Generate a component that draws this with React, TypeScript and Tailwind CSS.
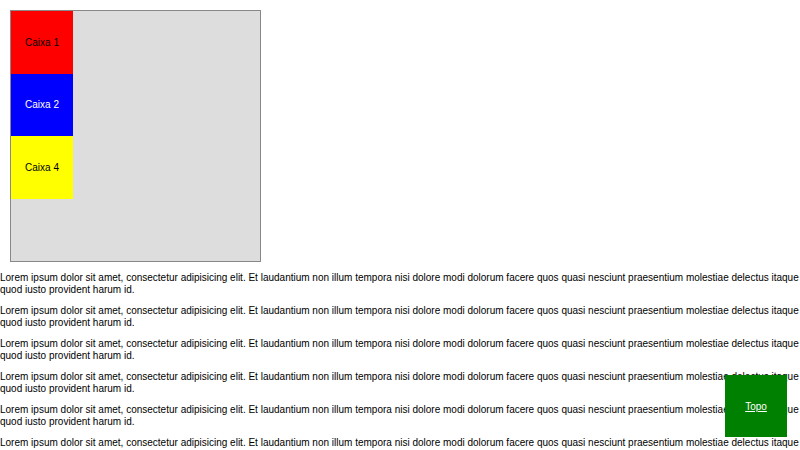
import React from "react";

const lorem =
  "Lorem ipsum dolor sit amet, consectetur adipisicing elit. Et laudantium non illum tempora nisi dolore modi dolorum facere quos quasi nesciunt praesentium molestiae delectus itaque quod iusto provident harum id.";

export default function App() {
  return (
    <div className="min-h-[450px] bg-white text-[10px] text-black" style={{ fontFamily: '"Liberation Sans", Arial, sans-serif' }}>
      {/* Container with boxes */}
      <div className="m-[10px] w-[251px] h-[252px] border border-[#888] bg-[#dddddd]">
        <div className="flex h-[62.5px] w-[62px] items-center justify-center bg-[#ff0000] text-black">Caixa 1</div>
        <div className="flex h-[62.5px] w-[62px] items-center justify-center bg-[#0000ff] text-white">Caixa 2</div>
        <div className="flex h-[62.5px] w-[62px] items-center justify-center bg-[#ffff00] text-black">Caixa 4</div>
      </div>

      {Array.from({ length: 8 }).map((_, i) => (
        <p key={i} className="my-[10px] leading-[11.5px]">
          {lorem}
        </p>
      ))}

      {/* Back to top */}
      <a
        href="#"
        className="fixed right-[13px] bottom-[13px] flex h-[62px] w-[62px] items-center justify-center bg-[#008000] text-white underline"
      >
        Topo
      </a>
    </div>
  );
}
